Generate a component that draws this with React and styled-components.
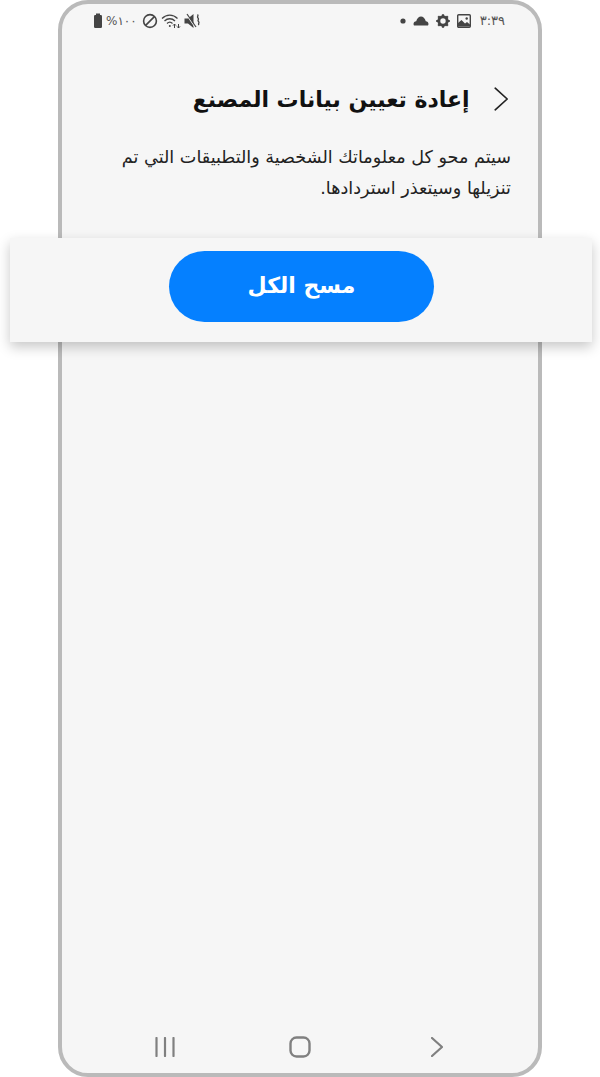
import React from 'react'
import styled, { createGlobalStyle } from 'styled-components'

const Global = createGlobalStyle`
  html, body { margin: 0; padding: 0; background: #fff; }
  body { width: 600px; height: 1077px; overflow: hidden; font-family: "DejaVu Sans", sans-serif; }
`
const Page = styled.div`
  position: relative;
  width: 600px;
  height: 1077px;
  display: flex;
  justify-content: center;
`
const Phone = styled.div`
  box-sizing: border-box;
  width: 484px;
  height: 1077px;
  border: 4px solid #bababa;
  border-radius: 30px;
  background: #f6f6f6;
  display: flex;
  flex-direction: column;
`
const StatusBar = styled.div`
  display: flex;
  justify-content: space-between;
  align-items: center;
  height: 18px;
  padding: 8px 33px 0 31px;
  color: #4a4a4a;
`
const StatusGroup = styled.div`
  display: flex;
  align-items: center;
  gap: ${({ $gap }) => $gap}px;
`
const StatusText = styled.span`
  font-size: ${({ $size }) => $size}px;
  line-height: 14px;
  color: #555;
  margin: 0 ${({ $mr }) => $mr || 0}px 0 ${({ $ml }) => $ml || 0}px;
  letter-spacing: ${({ $ls }) => $ls || 0}px;
`
const Content = styled.div`
  flex: 1;
  padding: 49px 27px 0 29px;
  direction: rtl;
`
const TitleRow = styled.div`
  display: flex;
  align-items: center;
  gap: 24px;
  height: 40px;
  padding-right: 3px;
`
const Title = styled.h1`
  margin: 0;
  font-size: 22px;
  font-weight: 700;
  color: #111;
  white-space: nowrap;
`
const Body = styled.p`
  margin: 23px 0 0;
  font-size: 17.6px;
  line-height: 31px;
  color: #222;
`
const Band = styled.div`
  position: absolute;
  left: 10px;
  top: 238px;
  width: 582px;
  height: 104px;
  background: #f6f6f6;
  box-shadow: 0 5px 12px rgba(0, 0, 0, 0.22);
  display: flex;
  justify-content: center;
  padding-top: 13px;
  box-sizing: border-box;
`
const ClearButton = styled.button`
  width: 265px;
  height: 71px;
  margin-left: 1px;
  padding: 0 0 2px;
  border: none;
  border-radius: 36px;
  background: #0580ff;
  color: #fff;
  font-family: inherit;
  font-size: 22px;
  font-weight: 700;
  direction: rtl;
`
const NavBar = styled.div`
  display: flex;
  align-items: center;
  justify-content: space-between;
  height: 30px;
  padding: 0 95px 11px 93px;
`
const Icon = styled.svg`
  display: block;
  flex: none;
`
const HomeIcon = styled(Icon)`
  margin-right: 6px;
`

const Battery = () => (
  <Icon width="10" height="16" viewBox="0 0 10 16" fill="#444">
    <rect x="3" y="0.5" width="4" height="2" />
    <rect x="1" y="2" width="8" height="13" rx="1.2" />
  </Icon>
)
const Blocked = () => (
  <Icon width="16" height="16" viewBox="0 0 16 16" fill="none" stroke="#444" strokeWidth="1.6">
    <circle cx="8" cy="8" r="6.4" />
    <path d="M3.6 12.4L12.4 3.6" />
  </Icon>
)
const Wifi = () => (
  <Icon width="20" height="16" viewBox="0 0 20 16" fill="none" stroke="#444" strokeWidth="1.3">
    <path d="M1 5.5C5.5 1 12 1 16.5 5.5" />
    <path d="M3.5 8C6.5 5 11 5 14 8" />
    <path d="M6 10.5C7.8 8.8 9.8 8.8 11.5 10.5" />
    <circle cx="8.8" cy="13" r="1" fill="#444" stroke="none" />
    <path d="M13.500 11v4M12 12.600l1.500-1.600 1.500 1.600M17.500 11v4M16 13.400l1.500 1.600 1.500-1.600" strokeWidth="1" />
  </Icon>
)
const Mute = () => (
  <Icon width="16" height="16" viewBox="0 0 16 16" fill="#444">
    <path d="M0.500 5.500h3.500L9.500 1v14L4 10.500H0.500z" />
    <path d="M2 1l9 13" stroke="#f6f6f6" strokeWidth="1.200" />
    <path d="M3 1l9 13" stroke="#444" strokeWidth="1.200" />
    <path d="M13.500 1.500c1.500 1.500-1 2 .5 3.500s-1 2 .5 3.500-1 2 .5 3.500" fill="none" stroke="#444" strokeWidth="1.300" />
  </Icon>
)
const Dot = () => (
  <Icon width="6" height="6" viewBox="0 0 6 6" fill="#444">
    <circle cx="3" cy="3" r="2.600" />
  </Icon>
)
const Cloud = () => (
  <Icon width="16" height="10" viewBox="0 0 16 10" fill="#444">
    <path d="M1 9.500C-.2 7.500 1 5.500 3.200 5.300 4 2 6 .5 8 .5s4 1.500 4.800 4.800c2.200.2 3.400 2.200 2.200 4.200z" />
  </Icon>
)
const Gear = () => (
  <Icon width="14" height="14" viewBox="0 0 14 14">
    <circle cx="7" cy="7" r="4.200" fill="none" stroke="#444" strokeWidth="3" />
    <path d="M7 .2v13.600M.2 7h13.600M2.200 2.200l9.600 9.600M11.800 2.200l-9.600 9.600" stroke="#444" strokeWidth="2.200" strokeDasharray="2.200 9.400" />
  </Icon>
)
const Picture = () => (
  <Icon width="14" height="14" viewBox="0 0 14 14">
    <rect x="0.700" y="0.700" width="12.600" height="12.600" rx="1" fill="none" stroke="#444" strokeWidth="1.400" />
    <circle cx="9.700" cy="4.500" r="1.200" fill="#444" />
    <path d="M1 12.500V9l3.500-3 3.500 3.500 2-1.500 3 2.500v2z" fill="#444" />
  </Icon>
)
const Chevron = ({ left, height, color, width }) => (
  <Icon width={height * 0.6} height={height} viewBox="0 0 12 20" fill="none" stroke={color} strokeWidth={width} strokeLinecap="round" strokeLinejoin="round">
    <path d={left ? 'M11 1L1 10l10 9' : 'M1 1l10 9-10 9'} />
  </Icon>
)
const Recents = () => (
  <Icon width="20" height="20" viewBox="0 0 20 20" stroke="#808080" strokeWidth="2.200" strokeLinecap="round">
    <path d="M1.500 1v18M10 1v18M18.500 1v18" />
  </Icon>
)
const Home = () => (
  <HomeIcon width="22" height="22" viewBox="0 0 22 22" fill="none" stroke="#808080" strokeWidth="2.400">
    <rect x="1.500" y="1.500" width="19" height="19" rx="6" />
  </HomeIcon>
)

export default function App() {
  return (
    <Page>
      <Global />
      <Phone>
        <StatusBar>
          <StatusGroup $gap={3}>
            <Battery />
            <StatusText $size={12} $mr={2}>%١٠٠</StatusText>
            <Blocked />
            <Wifi />
            <Mute />
          </StatusGroup>
          <StatusGroup $gap={7}>
            <Dot />
            <Cloud />
            <Gear />
            <Picture />
            <StatusText $size={13} $ml={2} $ls={1}>٣:٣٩</StatusText>
          </StatusGroup>
        </StatusBar>
        <Content>
          <TitleRow>
            <Chevron height={24} color="#222" width={1.400} />
            <Title>إعادة تعيين بيانات المصنع</Title>
          </TitleRow>
          <Body>
            سيتم محو كل معلوماتك الشخصية والتطبيقات التي تم تنزيلها وسيتعذر استردادها.
          </Body>
        </Content>
        <NavBar>
          <Recents />
          <Home />
          <Chevron height={20} color="#808080" width={2.200} />
        </NavBar>
      </Phone>
      <Band>
        <ClearButton>مسح الكل</ClearButton>
      </Band>
    </Page>
  )
}
